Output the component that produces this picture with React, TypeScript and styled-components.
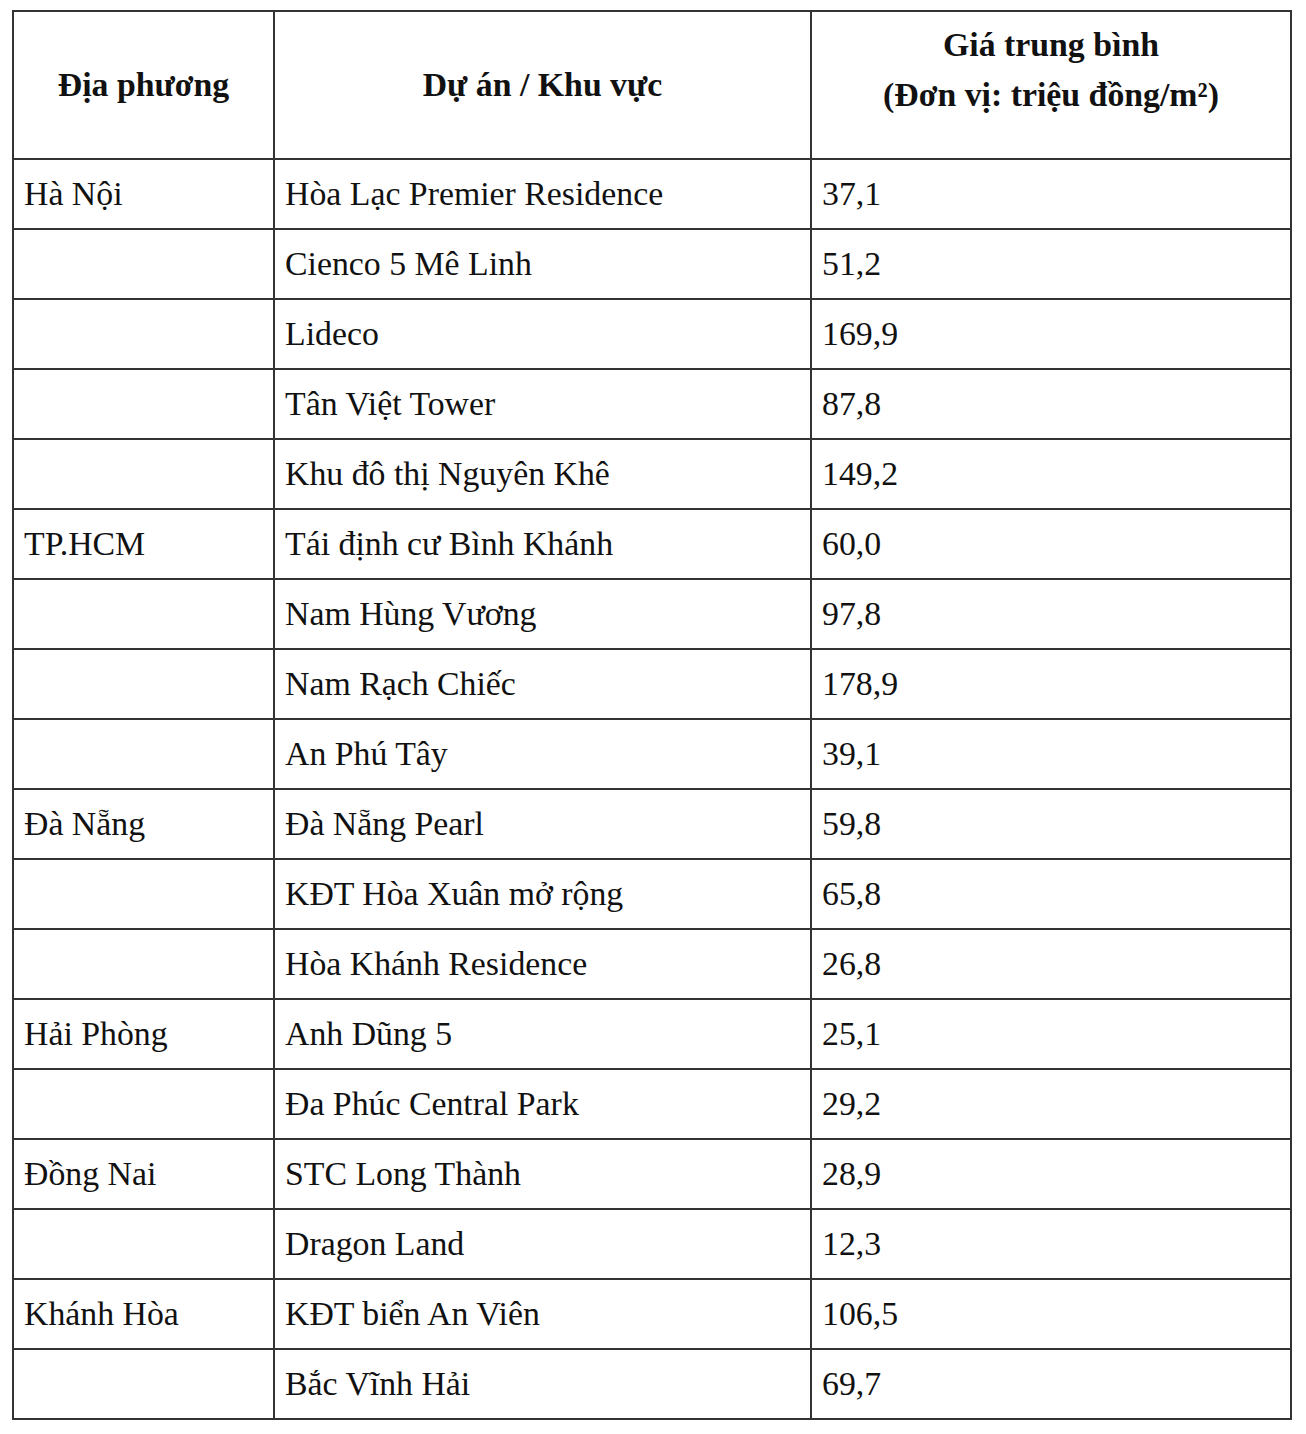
import styled, { createGlobalStyle } from 'styled-components'

const GlobalStyle = createGlobalStyle`
  body {
    margin: 0;
    background: #ffffff;
    font-family: "Liberation Serif", "Times New Roman", serif;
    color: #111111;
  }
`

const Page = styled.div`
  padding: 10px 0 0 12px;
`

const Table = styled.table`
  border-collapse: collapse;
  width: 1278px;
  table-layout: fixed;
  font-size: 33.8px;
`

const Th = styled.th<{ $top?: boolean }>`
  height: 148px;
  border: 2px solid #333333;
  font-weight: bold;
  text-align: center;
  vertical-align: ${(p) => (p.$top ? 'top' : 'middle')};
  padding: ${(p) => (p.$top ? '8px 10px 0' : '0 10px')};
  line-height: 50px;
  box-sizing: border-box;
`

const Td = styled.td`
  height: 70px;
  border: 2px solid #333333;
  padding: 0 10px;
  vertical-align: middle;
  line-height: 1.2;
  box-sizing: border-box;
`

const rows: [string, string, string][] = [
  ['Hà Nội', 'Hòa Lạc Premier Residence', '37,1'],
  ['', 'Cienco 5 Mê Linh', '51,2'],
  ['', 'Lideco', '169,9'],
  ['', 'Tân Việt Tower', '87,8'],
  ['', 'Khu đô thị Nguyên Khê', '149,2'],
  ['TP.HCM', 'Tái định cư Bình Khánh', '60,0'],
  ['', 'Nam Hùng Vương', '97,8'],
  ['', 'Nam Rạch Chiếc', '178,9'],
  ['', 'An Phú Tây', '39,1'],
  ['Đà Nẵng', 'Đà Nẵng Pearl', '59,8'],
  ['', 'KĐT Hòa Xuân mở rộng', '65,8'],
  ['', 'Hòa Khánh Residence', '26,8'],
  ['Hải Phòng', 'Anh Dũng 5', '25,1'],
  ['', 'Đa Phúc Central Park', '29,2'],
  ['Đồng Nai', 'STC Long Thành', '28,9'],
  ['', 'Dragon Land', '12,3'],
  ['Khánh Hòa', 'KĐT biển An Viên', '106,5'],
  ['', 'Bắc Vĩnh Hải', '69,7'],
]

export default function App() {
  return (
    <>
      <GlobalStyle />
      <Page>
        <Table>
          <colgroup>
            <col style={{ width: 261 }} />
            <col style={{ width: 537 }} />
            <col style={{ width: 480 }} />
          </colgroup>
          <thead>
            <tr>
              <Th>Địa phương</Th>
              <Th>Dự án / Khu vực</Th>
              <Th $top>
                Giá trung bình
                <br />
                (Đơn vị: triệu đồng/m²)
              </Th>
            </tr>
          </thead>
          <tbody>
            {rows.map(([place, project, price], i) => (
              <tr key={i}>
                <Td>{place}</Td>
                <Td>{project}</Td>
                <Td>{price}</Td>
              </tr>
            ))}
          </tbody>
        </Table>
      </Page>
    </>
  )
}
